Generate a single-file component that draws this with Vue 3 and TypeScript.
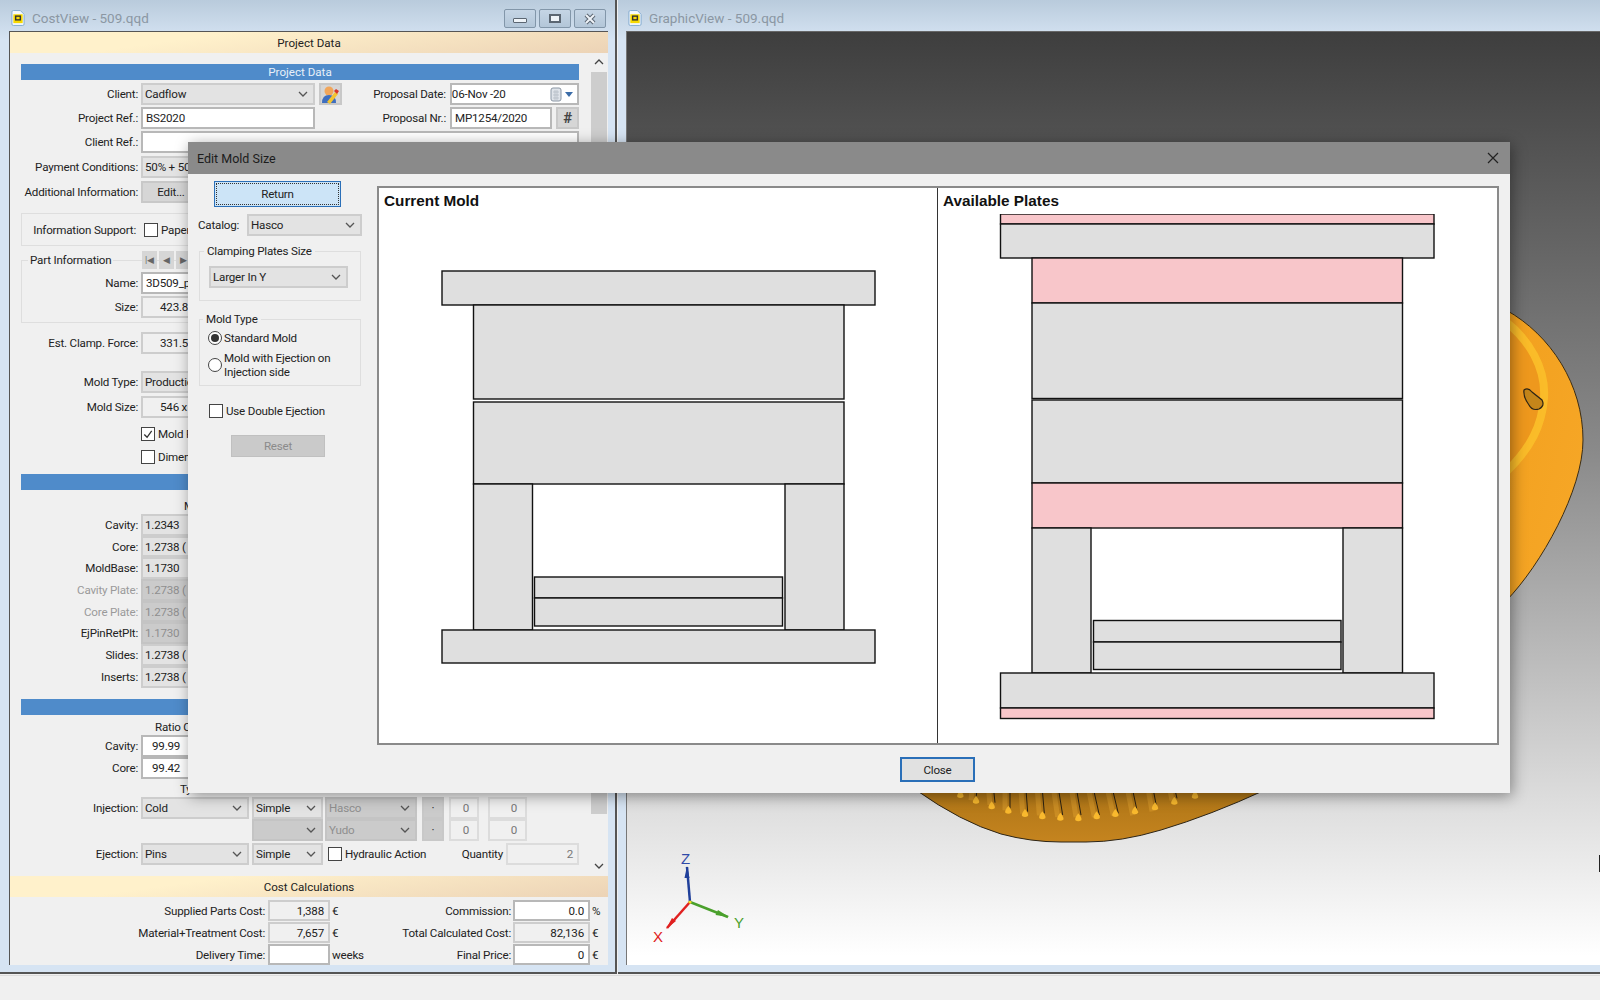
<script setup lang="ts">
type Plate = { x: number; y: number; w: number; h: number; pink?: boolean };

const materials = [
  { label: "Cavity:", value: "1.2343" },
  { label: "Core:", value: "1.2738 (" },
  { label: "MoldBase:", value: "1.1730" },
  { label: "Cavity Plate:", value: "1.2738 (", off: true },
  { label: "Core Plate:", value: "1.2738 (", off: true },
  { label: "EjPinRetPlt:", value: "1.1730", dim: true },
  { label: "Slides:", value: "1.2738 (" },
  { label: "Inserts:", value: "1.2738 (" },
];

// plate coordinates are page pixels, the svg viewBox does the offset
const currentPlates: Plate[] = [
  { x: 442, y: 271, w: 433, h: 34 },
  { x: 473.5, y: 305, w: 370.5, h: 94 },
  { x: 473.5, y: 402, w: 370.5, h: 82 },
  { x: 473.5, y: 484, w: 59, h: 146 },
  { x: 785, y: 484, w: 59, h: 146 },
  { x: 534.5, y: 577, w: 248, h: 21 },
  { x: 534.5, y: 598, w: 248, h: 28 },
  { x: 442, y: 630, w: 433, h: 33 },
];

const availablePlates: Plate[] = [
  { x: 1000.5, y: 214, w: 433.5, h: 10, pink: true },
  { x: 1000.5, y: 224, w: 433.5, h: 34 },
  { x: 1032, y: 258, w: 370.5, h: 45, pink: true },
  { x: 1032, y: 303, w: 370.5, h: 95.5 },
  { x: 1032, y: 400, w: 370.5, h: 83 },
  { x: 1032, y: 483, w: 370.5, h: 45, pink: true },
  { x: 1032, y: 528, w: 59, h: 145 },
  { x: 1343, y: 528, w: 59.5, h: 145 },
  { x: 1093.5, y: 620.5, w: 247.5, h: 21.5 },
  { x: 1093.5, y: 642, w: 247.5, h: 27.5 },
  { x: 1000.5, y: 673, w: 433.5, h: 35 },
  { x: 1000.5, y: 708, w: 433.5, h: 10.5, pink: true },
];

const toPage = (z: number, base: number) => base + z / 3;
const pinTips = [
  [178, 48], [225, 65], [272, 82], [322, 95], [372, 105], [424, 112], [478, 116],
  [532, 118], [587, 112], [643, 105], [702, 97], [762, 85], [820, 68], [882, 50],
];
const pins = pinTips.map(([x, y]) => ({ x: toPage(x, 900), y: toPage(y, 780) }));
const pinLines = [
  [228, 225, 55], [278, 282, 68], [327, 327, 85], [375, 380, 95], [424, 430, 100], [473, 485, 105],
  [527, 540, 105], [578, 595, 105], [635, 652, 100], [695, 710, 100], [757, 768, 88], [822, 828, 55],
].map(([x1, x2, y2]) => ({ x1: toPage(x1, 900), x2: toPage(x2, 900), y2: toPage(y2, 780) }));
</script>

<template>
  <div class="desktop">
    <svg class="defs" aria-hidden="true">
      <symbol id="chev" viewBox="0 0 10 6">
        <path d="M1 1l4 4 4-4" fill="none" stroke="currentColor" stroke-width="1.3" />
      </symbol>
      <symbol id="docicon" viewBox="0 0 15 18">
        <path d="M1 2.5Q1 1 2.5 1H10l4 4v10.5Q14 17 12.5 17h-10Q1 17 1 15.5z" fill="#f4f9fd" stroke="#7fa8cf" />
        <rect x="2.5" y="5" width="10" height="9.5" fill="#f7d900" />
        <rect x="5" y="7" width="5" height="4" fill="none" stroke="#333" stroke-width="1.5" />
      </symbol>
    </svg>

    <!-- left window -->
    <section class="window cost-window">
      <header class="win-title">
        <svg class="doc"><use href="#docicon" /></svg>
        <span>CostView - 509.qqd</span>
        <div class="win-btns">
          <button class="win-btn"><i class="min"></i></button>
          <button class="win-btn"><i class="max"></i></button>
          <button class="win-btn">
            <svg width="14" height="12" viewBox="0 0 14 12"><path d="M3 2l8 8M11 2l-8 8" stroke="#5b6672" stroke-width="4" /><path d="M3 2l8 8M11 2l-8 8" stroke="#eef3f8" stroke-width="2" /></svg>
          </button>
        </div>
      </header>
      <div class="client">
        <div class="band">Project Data</div>
        <div class="scroller">
          <div class="form">
            <div class="bar">Project Data</div>

            <div class="row mt4">
              <label>Client:</label>
              <div class="select w174">Cadflow<svg class="chev"><use href="#chev" /></svg></div>
              <button class="tool user-btn">
                <svg width="18" height="19" viewBox="0 0 18 19">
                  <circle cx="8" cy="6" r="4.5" fill="#f2a65a" />
                  <path d="M1 18q0-8 7-8t7 8z" fill="#3f6fc0" />
                  <path d="M6 17l8-10 3 2-8 10z" fill="#f4c430" />
                  <path d="M13 6l2-2 3 2-2 3z" fill="#d8352a" />
                </svg>
              </button>
              <label class="right-label">Proposal Date:</label>
              <div class="field white date">
                06-Nov -20
                <svg class="cal" width="26" height="16" viewBox="0 0 26 16">
                  <rect x="1" y="1" width="10" height="13" rx="2" fill="#dfe4ea" stroke="#8b97a5" />
                  <path d="M3 5h6M3 8h6M3 11h6M5 3v10M7 3v10" stroke="#b0b8c2" stroke-width=".7" />
                  <path d="M15 5h8l-4 5z" fill="#3b6ca8" />
                </svg>
              </div>
            </div>

            <div class="row mt2">
              <label>Project Ref.:</label>
              <div class="field white w174 pad3">BS2020</div>
              <label class="right-label second">Proposal Nr.:</label>
              <div class="field white nr pad3">MP1254/2020</div>
              <button class="tool hash">#</button>
            </div>

            <div class="row mt2">
              <label>Client Ref.:</label>
              <div class="field white grow"></div>
            </div>

            <div class="row mt3">
              <label>Payment Conditions:</label>
              <div class="select grow">50% + 50%</div>
            </div>

            <div class="row mt3">
              <label>Additional Information:</label>
              <button class="tool edit">Edit...</button>
            </div>

            <div class="group info-group">
              <label class="info-label">Information Support:</label>
              <span class="check"></span><span class="check-text">Paper</span>
            </div>

            <fieldset class="group part-group">
              <legend>Part Information</legend>
              <div class="nav">
                <button class="tool nav-btn">|◀</button>
                <button class="tool nav-btn">◀</button>
                <button class="tool nav-btn">▶</button>
              </div>
              <div class="row part-first">
                <label class="part-label">Name:</label>
                <div class="field white grow pad3">3D509_part</div>
              </div>
              <div class="row mt2">
                <label class="part-label">Size:</label>
                <div class="field grow value-in">423.8 x 300</div>
              </div>
            </fieldset>

            <div class="row mt9">
              <label>Est. Clamp. Force:</label>
              <div class="field grow value-in">331.5</div>
            </div>

            <div class="row mt17">
              <label>Mold Type:</label>
              <div class="select grow">Production</div>
            </div>

            <div class="row mt3">
              <label>Mold Size:</label>
              <div class="field grow value-in">546 x 446</div>
            </div>

            <div class="check-row mt9">
              <span class="check checked">
                <svg width="13" height="13" viewBox="0 0 13 13"><path d="M2.5 6.5l3 3 5-7" fill="none" stroke="#333" stroke-width="1.4" /></svg>
              </span>
              <span class="check-text">Mold Fl</span>
            </div>
            <div class="check-row mt9">
              <span class="check"></span><span class="check-text">Dimensions</span>
            </div>

            <div class="bar mt10"></div>
            <div class="caption materials-cap">M</div>

            <div class="rows-tight">
              <div v-for="m in materials" :key="m.label" class="row">
                <label :class="{ muted: m.off }">{{ m.label }}</label>
                <div class="select grow" :class="{ disabled: m.off || m.dim }">{{ m.value }}</div>
              </div>
            </div>

            <div class="bar ratio-bar"></div>
            <div class="caption ratio-cap">Ratio C</div>

            <div class="row">
              <label>Cavity:</label>
              <div class="field white grow ratio-val">99.99</div>
            </div>
            <div class="row">
              <label>Core:</label>
              <div class="field white grow ratio-val">99.42</div>
            </div>

            <div class="caption type-cap">Ty</div>

            <div class="row">
              <label>Injection:</label>
              <div class="select w108">Cold<svg class="chev"><use href="#chev" /></svg></div>
              <div class="select w71">Simple<svg class="chev"><use href="#chev" /></svg></div>
              <div class="select w92 disabled">Hasco<svg class="chev"><use href="#chev" /></svg></div>
              <button class="tool dot">·</button>
              <div class="field num n30">0</div>
              <div class="field num n38">0</div>
            </div>
            <div class="row">
              <div class="spacer"></div>
              <div class="select w71 disabled"><svg class="chev"><use href="#chev" /></svg></div>
              <div class="select w92 disabled">Yudo<svg class="chev"><use href="#chev" /></svg></div>
              <button class="tool dot">·</button>
              <div class="field num n30">0</div>
              <div class="field num n38">0</div>
            </div>
            <div class="row eject">
              <label>Ejection:</label>
              <div class="select w108">Pins<svg class="chev"><use href="#chev" /></svg></div>
              <div class="select w71">Simple<svg class="chev"><use href="#chev" /></svg></div>
              <span class="check hyd"></span><span class="check-text">Hydraulic Action</span>
              <span class="qty-label">Quantity</span>
              <div class="field num qty">2</div>
            </div>
          </div>
          <div class="scrollbar">
            <svg class="arrow" width="10" height="6"><use href="#chev" transform="rotate(180 5 3)" /></svg>
            <div class="thumb"></div>
            <div class="track"></div>
            <svg class="arrow" width="10" height="6"><use href="#chev" /></svg>
          </div>
        </div>

        <div class="band">Cost Calculations</div>
        <div class="costs">
          <div class="cost-row">
            <label class="c1">Supplied Parts Cost:</label>
            <div class="field cost-a num">1,388</div><span class="unit">€</span>
            <label class="c2">Commission:</label>
            <div class="field white cost-b num">0.0</div><span class="unit">%</span>
          </div>
          <div class="cost-row">
            <label class="c1">Material+Treatment Cost:</label>
            <div class="field cost-a num">7,657</div><span class="unit">€</span>
            <label class="c2">Total Calculated Cost:</label>
            <div class="field cost-b num">82,136</div><span class="unit">€</span>
          </div>
          <div class="cost-row">
            <label class="c1">Delivery Time:</label>
            <div class="field white cost-a num"></div><span class="unit">weeks</span>
            <label class="c2">Final Price:</label>
            <div class="field white cost-b num">0</div><span class="unit">€</span>
          </div>
        </div>
      </div>
    </section>

    <!-- right window -->
    <section class="window graphic-window">
      <header class="win-title">
        <svg class="doc"><use href="#docicon" /></svg>
        <span>GraphicView - 509.qqd</span>
      </header>
      <div class="viewport">
        <svg class="scene" viewBox="626 32 974 933">
          <defs>
            <linearGradient id="body" x1="0" y1="0" x2="1" y2="1">
              <stop offset="0" stop-color="#f2a01e" />
              <stop offset="1" stop-color="#f7a828" />
            </linearGradient>
            <linearGradient id="under" x1="0" y1="0" x2="0" y2="1">
              <stop offset="0" stop-color="#ae7516" />
              <stop offset="1" stop-color="#c5841f" />
            </linearGradient>
          </defs>
          <path d="M1505 310C1550 335 1582 385 1582 440C1582 490 1540 565 1505 601Z" fill="url(#body)" stroke="#3a2c14" stroke-width="1" />
          <path d="M1505 322C1528 340 1545 368 1543 398C1541 425 1530 448 1505 472Z" fill="#ee981d" />
          <path d="M1505 322C1528 340 1545 368 1543 398C1541 425 1530 448 1505 472" fill="none" stroke="#fbbf2a" stroke-width="8" stroke-opacity=".9" />
          <path d="M1523 390Q1527 387 1531 392L1541 400Q1544 406 1538 409Q1531 411 1528 405Q1522 397 1523 390Z" fill="#c4851a" stroke="#2c2416" stroke-width="1.2" />
          <path d="M915 790Q960 822 1000 834Q1030 842 1060 842H1085Q1120 842 1160 830Q1210 815 1264 790Z" fill="url(#under)" stroke="#2c2416" stroke-width="1" />
          <line v-for="(l, i) in pinLines" :key="'s' + i" :x1="l.x1 - 5" y1="790" :x2="l.x2 - 5" :y2="l.y2 + 2" stroke="#d89a2c" stroke-width="5" stroke-opacity=".55" />
          <line v-for="(l, i) in pinLines" :key="'l' + i" :x1="l.x1" y1="790" :x2="l.x2" :y2="l.y2" stroke="#2b2110" stroke-width="1" />
          <path v-for="(p, i) in pins" :key="'p' + i" :d="`M${p.x} ${p.y - 6}q4 5 3 7q-3 2-6 0q-1-2 3-7z`" fill="#f9b92e" />

          <!-- axis triad -->
          <path d="M689 902L686 867" stroke="#1f3f9a" stroke-width="2.5" />
          <path d="M686 866l-2.5 12h5z" fill="#1f3f9a" />
          <path d="M689 902L727 917" stroke="#4aa02c" stroke-width="2.5" />
          <path d="M728 917l-11-7-2.5 5z" fill="#4aa02c" />
          <path d="M689 902L666 928" stroke="#e02020" stroke-width="2.5" />
          <path d="M665 929l10-8-4-3z" fill="#e02020" />
          <circle cx="689" cy="902" r="1.6" fill="#f5e020" />
          <text x="680" y="864" class="axis" fill="#2f4aa8">Z</text>
          <text x="733" y="928" class="axis" fill="#4aa02c">Y</text>
          <text x="652" y="942" class="axis" fill="#e02020">X</text>
          <rect x="1598" y="855" width="2" height="17" fill="#222" />
        </svg>
      </div>
    </section>
    <div class="status"></div>

    <!-- dialog over both windows -->
    <section class="dialog">
      <header class="dlg-title">
        <span>Edit Mold Size</span>
        <svg width="12" height="12" viewBox="0 0 12 12"><path d="M1 1l10 10M11 1L1 11" stroke="#222" stroke-width="1.2" /></svg>
      </header>
      <div class="dlg-body">
        <aside class="side">
          <button class="return"><span>Return</span></button>
          <div class="catalog">
            <label>Catalog:</label>
            <div class="select cat-select">Hasco<svg class="chev"><use href="#chev" /></svg></div>
          </div>
          <fieldset class="box clamp-box">
            <legend>Clamping Plates Size</legend>
            <div class="select clamp-select">Larger In Y<svg class="chev"><use href="#chev" /></svg></div>
          </fieldset>
          <fieldset class="box type-box">
            <legend>Mold Type</legend>
            <div class="radio-row"><span class="radio on"></span><span>Standard Mold</span></div>
            <div class="radio-row second-radio"><span class="radio"></span><span>Mold with Ejection on<br />Injection side</span></div>
          </fieldset>
          <div class="check-row double">
            <span class="check"></span><span class="check-text">Use Double Ejection</span>
          </div>
          <button class="reset">Reset</button>
        </aside>
        <div class="panels">
          <div class="panel">
            <h3>Current Mold</h3>
            <svg class="plates" viewBox="379 214 558 528">
              <rect v-for="(p, i) in currentPlates" :key="i" :x="p.x" :y="p.y" :width="p.w" :height="p.h" fill="#dfdfdf" stroke="#111" stroke-width="1.4" />
            </svg>
          </div>
          <div class="panel last">
            <h3>Available Plates</h3>
            <svg class="plates" viewBox="938 214 558 528">
              <rect v-for="(p, i) in availablePlates" :key="i" :x="p.x" :y="p.y" :width="p.w" :height="p.h" :fill="p.pink ? '#f8c6ca' : '#dfdfdf'" stroke="#111" stroke-width="1.4" />
            </svg>
          </div>
        </div>
      </div>
      <footer class="dlg-foot"><button class="close-btn">Close</button></footer>
    </section>
  </div>
</template>

<style>
html,
body {
  margin: 0;
  background: #f0f0f0;
}
</style>

<style scoped>
.desktop {
  position: relative;
  width: 1600px;
  height: 1000px;
  overflow: hidden;
  background: #f0f0f0;
  font-family: Roboto, "Liberation Sans", sans-serif;
  font-size: 11.6px;
  letter-spacing: -0.2px;
  color: #222;
}
.defs {
  position: absolute;
  width: 0;
  height: 0;
}
button {
  font: inherit;
  letter-spacing: inherit;
  color: inherit;
  padding: 0;
}

/* windows */
.window {
  position: absolute;
  top: 0;
  height: 974px;
  box-sizing: border-box;
  background: linear-gradient(#b9cbdc, #d6e4f3 40px);
  border-bottom: 2px solid #555;
  display: flex;
  flex-direction: column;
}
.cost-window {
  left: 0;
  width: 617px;
  border-right: 2px solid #555;
}
.graphic-window {
  left: 618px;
  width: 982px;
}
.win-title {
  height: 31px;
  flex: none;
  display: flex;
  align-items: center;
  padding: 4px 0 0 11px;
  box-sizing: border-box;
  color: #8b97a3;
  font-size: 13.5px;
  letter-spacing: 0;
}
.graphic-window .win-title {
  padding-left: 10px;
}
.doc {
  width: 14px;
  height: 18px;
  margin-right: 7px;
}
.win-btns {
  margin-left: auto;
  margin-right: 9px;
  display: flex;
  gap: 3px;
  align-self: flex-start;
  margin-top: 5px;
}
.win-btn {
  width: 32px;
  height: 19px;
  box-sizing: border-box;
  background: linear-gradient(#c5d5e5, #b3c6d8);
  border: 1px solid #8296a9;
  border-radius: 2px;
  display: flex;
  align-items: center;
  justify-content: center;
}
.min {
  display: block;
  width: 14px;
  height: 5px;
  background: #eef3f8;
  border: 1px solid #5b6672;
  border-radius: 1px;
  margin-top: 3px;
  box-sizing: border-box;
}
.max {
  display: block;
  width: 12px;
  height: 9px;
  background: #eef3f8;
  border: 2px solid #5b6672;
  box-sizing: border-box;
}
.client {
  margin: 0 7px 0 9px;
  height: 934px;
  background: #f0f0f0;
  border-top: 1px solid #555;
  border-left: 1px solid #555;
  box-sizing: border-box;
  display: flex;
  flex-direction: column;
}
.band {
  height: 21px;
  flex: none;
  background: linear-gradient(172deg, #fff1cb 30%, #ecd3b6);
  display: flex;
  align-items: center;
  justify-content: center;
  letter-spacing: 0;
}
.scroller {
  height: 823px;
  flex: none;
  display: flex;
}
.form {
  width: 570px;
  padding: 11px 0 0 11px;
  box-sizing: border-box;
  overflow: hidden;
}
.bar {
  height: 16px;
  background: #4f8bca;
  color: #e8f0f8;
  text-align: center;
  line-height: 16px;
  width: 558px;
  letter-spacing: 0;
}
.row {
  display: flex;
  align-items: center;
  height: 22px;
  width: 558px;
  flex: none;
}
.row > label,
.spacer {
  width: 117px;
  flex: none;
  text-align: right;
  white-space: nowrap;
  margin-right: 3px;
}
.row > .spacer {
  width: 228px;
}
.muted {
  color: #9a9a9a;
}
.mt2 { margin-top: 2px; }
.mt3 { margin-top: 3px; }
.mt4 { margin-top: 3px; }
.mt9 { margin-top: 9px; }
.mt10 { margin-top: 10px; }
.mt17 { margin-top: 17px; }

.field,
.select {
  height: 22px;
  box-sizing: border-box;
  border: 2px solid #cdcdcd;
  display: flex;
  align-items: center;
  white-space: nowrap;
  overflow: hidden;
  position: relative;
}
.field {
  background: #f0f0f0;
  padding: 0 4px;
}
.field.white {
  background: #fff;
  border-color: #b8b8b8;
}
.select {
  background: #e3e3e3;
  padding: 0 2px;
}
.select.disabled {
  background: #cbcbcb;
  color: #8f8f8f;
  border-color: #c4c4c4;
}
.chev {
  position: absolute;
  right: 5px;
  top: 6px;
  width: 10px;
  height: 6px;
  color: #555;
}
.grow { flex: 1; }
.pad3 { padding-left: 3px; }
.value-in { padding-left: 17px; }
.w174 { width: 174px; flex: none; }
.w108 { width: 108px; flex: none; margin-right: 3px; }
.w71 { width: 71px; flex: none; margin-right: 2px; }
.w92 { width: 92px; flex: none; }
.tool {
  background: #d6d6d6;
  border: 2px solid #c8c8c8;
  height: 22px;
  box-sizing: border-box;
  display: flex;
  align-items: center;
  justify-content: center;
}
.user-btn {
  width: 23px;
  margin-left: 4px;
}
.row > .right-label {
  margin-left: 23px;
  width: 81px;
  margin-right: 4px;
}
.row > .right-label.second {
  margin-left: 50px;
}
.date {
  width: 130px;
  padding-left: 0;
}
.cal {
  position: absolute;
  right: 1px;
  top: 2px;
}
.nr {
  width: 102px;
}
.hash {
  width: 23px;
  margin-left: 4px;
  font-size: 15px;
  font-weight: bold;
  color: #444;
}
.edit {
  width: 60px;
}

.group {
  width: 558px;
  box-sizing: border-box;
  border: 1px solid #dedede;
}
.info-group {
  margin-top: 10px;
  height: 33px;
  display: flex;
  align-items: center;
}
.info-label {
  width: 114px;
  text-align: right;
  white-space: nowrap;
  margin-right: 8px;
}
.check {
  display: inline-flex;
  width: 14px;
  height: 14px;
  flex: none;
  box-sizing: border-box;
  background: #fff;
  border: 1px solid #444;
  align-items: center;
  justify-content: center;
}
.check-text {
  margin-left: 3px;
  white-space: nowrap;
}
.part-group {
  margin: 6px 0 0;
  padding: 0 7px 0 0;
  height: 71px;
  position: relative;
}
.part-group legend {
  margin-left: 6px;
  padding: 0 2px;
  line-height: 16px;
}
.part-first {
  margin-top: 4px;
}
.part-group .row {
  width: auto;
}
.row > .part-label {
  width: 116px;
}
.nav {
  position: absolute;
  left: 120px;
  top: -17px;
  display: flex;
  gap: 2px;
}
.nav-btn {
  width: 15px;
  height: 18px;
  border: 0;
  font-size: 9px;
  color: #666;
}
.check-row {
  display: flex;
  align-items: center;
  height: 14px;
  padding-left: 120px;
}
.check-row.double {
  padding-left: 0;
}
.caption {
  height: 16px;
  line-height: 16px;
  white-space: nowrap;
}
.materials-cap {
  margin: 8px 0 0 163px;
}
.rows-tight {
  display: flex;
  flex-direction: column;
}
.rows-tight .row {
  height: 21.7px;
}
.rows-tight .select {
  height: 21.7px;
}
.ratio-bar {
  margin-top: 11px;
}
.ratio-cap {
  margin: 4px 0 0 134px;
}
.ratio-val {
  padding-left: 9px;
}
.type-cap {
  margin: 2px 0 0 159px;
}
.eject {
  margin-top: 2px;
}
.num {
  justify-content: flex-end;
}
.dot {
  width: 22px;
  margin-left: 5px;
  background: #cbcbcb;
}
.n30 {
  width: 30px;
  margin-left: 5px;
  flex: none;
  color: #777;
  border-color: #dcdcdc;
  padding-right: 8px;
}
.n38 {
  width: 39px;
  margin-left: 9px;
  flex: none;
  color: #777;
  border-color: #dcdcdc;
  padding-right: 8px;
}
.hyd {
  margin-left: 3px;
}
.qty-label {
  margin-left: auto;
  margin-right: 3px;
}
.qty {
  width: 73px;
  flex: none;
  color: #777;
  border-color: #dcdcdc;
}
.scrollbar {
  width: 17px;
  margin-left: 10px;
  display: flex;
  flex-direction: column;
  align-items: center;
  padding-top: 4px;
  box-sizing: border-box;
  height: 818px;
}
.arrow {
  color: #444;
  flex: none;
  margin: 2px 0;
}
.thumb {
  width: 16px;
  height: 742px;
  margin-top: 5px;
  background: #cdcdcd;
  flex: none;
}
.track {
  flex: 1;
}
.costs {
  padding-top: 3px;
}
.cost-row {
  display: flex;
  align-items: center;
  height: 21.9px;
}
.cost-row .field {
  height: 21px;
}
.c1 {
  width: 255px;
  flex: none;
  text-align: right;
  margin-right: 3px;
  white-space: nowrap;
}
.cost-a {
  width: 62px;
  flex: none;
}
.unit {
  width: 18px;
  margin-left: 2px;
  flex: none;
  white-space: nowrap;
}
.c2 {
  width: 161px;
  flex: none;
  text-align: right;
  margin-right: 2px;
  white-space: nowrap;
}
.cost-b {
  width: 77px;
  flex: none;
}
.cost-b + .unit {
  width: 14px;
}

/* graphic view */
.viewport {
  margin-left: 8px;
  height: 934px;
  background: linear-gradient(#3e3e3e, #8a8a8a 45%, #dcdcdc 82%, #fff 99%);
  border-top: 1px solid #666;
  border-left: 1px solid #777;
  box-sizing: border-box;
}
.scene {
  display: block;
  width: 974px;
  height: 933px;
}
.axis {
  font-size: 15px;
  font-family: "Liberation Sans", sans-serif;
}
.status {
  position: absolute;
  left: 0;
  right: 0;
  top: 975px;
  height: 1px;
  background: #dcdcdc;
}

/* dialog */
.dialog {
  position: absolute;
  left: 188px;
  top: 142px;
  width: 1322px;
  height: 651px;
  background: #f0f0f0;
  box-shadow: 2px 3px 14px rgba(0, 0, 0, 0.4);
  display: flex;
  flex-direction: column;
}
.dlg-title {
  height: 32px;
  flex: none;
  background: #8a8a8a;
  display: flex;
  align-items: center;
  justify-content: space-between;
  padding: 0 11px 0 9px;
  font-size: 12.5px;
  letter-spacing: 0;
  color: #1c1c1c;
}
.dlg-body {
  display: flex;
  padding-top: 12px;
}
.side {
  width: 189px;
  flex: none;
  padding-left: 10px;
  box-sizing: border-box;
  height: 559px;
}
.return {
  display: block;
  width: 127px;
  height: 26px;
  margin: -5px 0 0 16px;
  background: #cce4f7;
  border: 1px solid #2a6fb8;
  padding: 1px;
  box-sizing: border-box;
}
.return span {
  display: block;
  height: 100%;
  line-height: 20px;
  border: 1px dotted #333;
  box-sizing: border-box;
}
.catalog {
  display: flex;
  align-items: center;
  margin-top: 7px;
}
.catalog label {
  width: 49px;
  flex: none;
}
.cat-select {
  width: 115px;
  flex: none;
}
.box {
  width: 162px;
  margin: 0;
  padding: 0 9px;
  box-sizing: border-box;
  border: 1px solid #dedede;
  min-width: 0;
  margin-left: 1px;
}
.box legend {
  padding: 0 3px;
  line-height: 16px;
  margin-left: -5px;
}
.clamp-box {
  margin-top: 7px;
  height: 58px;
  padding-top: 7px;
}
.clamp-select {
  width: 139px;
}
.type-box {
  margin-top: 10px;
  height: 75px;
  padding-left: 8px;
  padding-top: 4px;
}
.radio-row {
  display: flex;
  align-items: center;
  gap: 2px;
  line-height: 14px;
}
.second-radio {
  margin-top: 6px;
}
.radio {
  width: 14px;
  height: 14px;
  border-radius: 50%;
  border: 1px solid #444;
  background: #fff;
  box-sizing: border-box;
  flex: none;
  position: relative;
}
.radio.on::after {
  content: "";
  position: absolute;
  inset: 2px;
  border-radius: 50%;
  background: #333;
}
.double {
  margin: 18px 0 0 11px;
}
.reset {
  display: block;
  width: 94px;
  height: 22px;
  margin: 17px 0 0 33px;
  background: #cacaca;
  border: 1px solid #c0c0c0;
  color: #8a8a8a;
}
.panels {
  flex: 1;
  margin-right: 14px;
  height: 559px;
  display: flex;
  box-sizing: border-box;
  border: 2px solid #8a8a8a;
  background: #fff;
}
.panel {
  width: 559px;
  flex: none;
  border-right: 1.5px solid #333;
  display: flex;
  flex-direction: column;
  box-sizing: border-box;
}
.panel.last {
  border-right: 0;
  flex: 1;
}
.panel h3 {
  margin: 0;
  height: 26px;
  flex: none;
  padding-left: 5px;
  box-sizing: border-box;
  font: bold 15.3px/26px "Liberation Sans", sans-serif;
  letter-spacing: 0;
  color: #111;
}
.plates {
  display: block;
  width: 558px;
  height: 528px;
}
.dlg-foot {
  display: flex;
  padding: 12px 0 0 712px;
}
.close-btn {
  width: 75px;
  height: 25px;
  background: #e1e1e1;
  border: 2px solid #2a6fb8;
}
</style>
